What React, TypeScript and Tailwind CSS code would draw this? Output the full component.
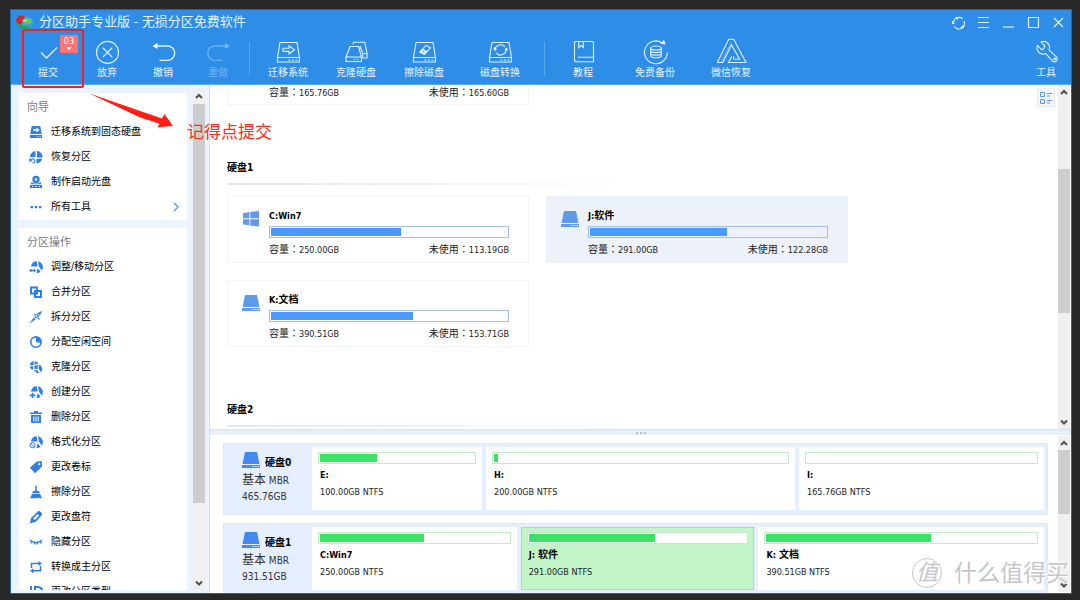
import type { ReactNode } from "react";

const BLUE = "#2f7fe6";

/* ---------- icons ---------- */

function ToolSvg({ children }: { children: ReactNode }) {
  return (
    <svg className="h-6 w-6 overflow-visible" viewBox="0 0 24 24" fill="none" stroke="#e3f1ff" strokeWidth="1.1">
      {children}
    </svg>
  );
}

const driveOutline = (
  <>
    <path d="M4 2.5h17l2.5 15h-22z" />
    <path d="M1.5 17.5V22h22v-4.5M12.5 20h2M16 20h2M19.5 20h2" />
  </>
);

const toolIcons: Record<string, ReactNode> = {
  commit: <path d="M5 12.5l5.5 5.5L21 7.5" strokeWidth="1.4" />,
  discard: (
    <>
      <circle cx="12.5" cy="12.4" r="11" />
      <path d="M7.8 7.7l9.4 9.4M17.2 7.7l-9.4 9.4" strokeWidth="1.3" />
    </>
  ),
  undo: (
    <>
      <path d="M4 6h12.5a7.2 7.2 0 0 1 0 14.4H8.5" strokeWidth="1.4" />
      <path d="M1.5 6l5-3v6z" fill="#fff" stroke="none" />
    </>
  ),
  redo: (
    <>
      <path d="M21 6H9a7.2 7.2 0 0 0 0 14.4h7" strokeWidth="1.4" />
      <path d="M24 6l-5-3v6z" fill="#fff" stroke="none" />
    </>
  ),
  migrate: (
    <>
      {driveOutline}
      <path d="M7 8.2h6V5.8l5.5 4-5.5 4v-2.4H7z" />
    </>
  ),
  clone: (
    <>
      <path d="M6 6.5h8.5l3 10.5H2z" />
      <path d="M2 17v4.5h15.5V17M9.5 19.3h1.5M12.5 19.3H14" />
      <path d="M8.7 4.2l.8-2h11.3l2.2 11.3H18.8l-3-7.5M23 13.5V18h-4.2v-4.5" />
    </>
  ),
  wipe: (
    <>
      {driveOutline}
      <path d="M8 12l6-6.500 4.500 2.300-6 6.500z" />
      <path d="M10.500 9.300l4.500 2.300-2.500 2.700L8 12z" fill="#e3f1ff" />
      <path d="M10.800 11.400l1.700.9" stroke="#2e8de7" />
    </>
  ),
  convert: (
    <>
      {driveOutline}
      <path d="M7 11a5.6 5.6 0 0 1 10-4M18.2 8.8a5.6 5.6 0 0 1-10 4" />
      <path d="M5.3 9.5l1.7-3 2 3zM16.5 10.2l1.8-3 1.7 3z" fill="#fff" stroke="none" />
    </>
  ),
  book: (
    <>
      <path d="M22.5 17.3V2.5a1 1 0 0 0-1-1h-17a1 1 0 0 0-1 1V20a1.6 1.6 0 0 0 1.6 1.7h17.4v-4.4H7" />
      <path d="M7.7 1.5v6l2.3-2 2.3 2v-6" />
    </>
  ),
  backup: (
    <>
      <path d="M24.300 12.500A11.400 11.400 0 1 1 19 2.700" />
      <path d="M17.500 3.800L21-.2l1.400 4.600z" fill="#fff" stroke="none" />
      <ellipse cx="13" cy="8" rx="5.3" ry="2" />
      <path d="M7.700 8v7.700c0 1.200 2.400 2 5.300 2s5.300-.8 5.300-2V8M7.700 10.600c0 1.200 2.400 2 5.300 2s5.300-.8 5.300-2M7.700 13.200c0 1.200 2.400 2 5.300 2s5.300-.8 5.300-2" />
    </>
  ),
  wechat: (
    <>
      <path d="M-1.700 22.500L9.800-.7h4.900L27 22.500H9.500l3.200-6" />
      <path d="M-1.700 22.500h5.500l8.700-17.500 8.200 14.200h-4.500c-1.800 0-2-1.300-1.600-2.900" />
      <path d="M2 22.500L12.300 2.500" opacity=".35" />
    </>
  ),
  wrench: (
    <>
      <path
        transform="translate(25 0) scale(-1 1)"
        d="M14.700 6.300a1 1 0 0 0 0 1.400l1.600 1.600a1 1 0 0 0 1.400 0l3.770-3.770a6 6 0 0 1-7.940 7.940l-6.910 7.410a2.700 2.700 0 0 1-4-4l7.410-6.910a6 6 0 0 1 7.940-7.940l-3.760 3.760z"
      />
      <circle cx="20.800" cy="18.700" r="1" />
    </>
  ),
};

// the pie piece shared by several partition commands
const pie = <path d="M2 6.500A5.800 5.800 0 0 1 7.500 1l1.200 5.600zM9 1.200l1 5.500 2.700 3.800A5.900 5.900 0 0 0 9 1.200zM8.500 8.300l-1 4.600c1.700.1 3-.4 4.100-1.500z" />;

const sideIcons: Record<string, ReactNode> = {
  migrate: (
    <>
      <path d="M2.800 1h8.400l1.600 8H1.200zM1 10h12v3H1z" />
      <path d="M4 4.300h3.500V2.600L10.700 5 7.500 7.500V5.800H4zM8.500 11.200h1v.8h-1zM10.700 11.200h1v.8h-1z" fill="#fff" />
    </>
  ),
  recover: (
    <>
      <path d="M6.500 1A6 6 0 0 0 1 7h5.500zM8 1v6.500h5.500A6 6 0 0 0 8 1zM7.500 8.800h5.700a6 6 0 0 1-5.700 4.500z" />
      <path d="M1 10.200c1.500-2 4.300-1.700 4.800.5.300 1.700-1.300 2.800-2.500 2M.8 8.500v2.400h2.400" fill="none" stroke={BLUE} strokeWidth="1.200" />
    </>
  ),
  disc: (
    <>
      <path d="M7 .8a3.700 3.700 0 1 0 0 7.400A3.700 3.700 0 0 0 7 .8zm0 2.500a1.200 1.200 0 1 1 0 2.400 1.200 1.200 0 0 1 0-2.400z" fillRule="evenodd" />
      <path d="M2.500 7l-.8 2.200h10.600L11.500 7C9.200 9.300 5 9.300 2.500 7zM1 10h12v3H1z" />
      <path d="M3 11.100h1.200v.9H3zM6.400 11.100h1.200v.9H6.400zM9.800 11.100H11v.9H9.800z" fill="#fff" />
    </>
  ),
  dots: <path d="M1.500 6H4v2.200H1.500zM5.700 6h2.500v2.200H5.700zM10 6h2.500v2.200H10z" />,
  resize: (
    <>
      {pie}
      <path d="M0 10.500l2.500-2v1.300h2.400V8.500l2.400 2-2.400 2v-1.300H2.500v1.300z" />
    </>
  ),
  merge: (
    <>
      <path d="M1 1.500h8v8H1zM3 3.500v4h4v-4z" fillRule="evenodd" />
      <path d="M5 5h8v8H5zM7 7v4h4V7z" fillRule="evenodd" />
    </>
  ),
  split: <path d="M13.500.8L8.300 3.200l2.500 2.300zM8 3.800L5.200 6.700l2 2L10.300 6zM4.700 7.600L.5 13.500l6-3.900zM5.500 3.500l5.500 5.700-1 .5L4.700 4.300z" />,
  alloc: <path d="M7 1a6 6 0 1 0 0 12A6 6 0 0 0 7 1zm0 1.800V7.500h4.200A4.300 4.300 0 1 1 7 2.800z" fillRule="evenodd" />,
  clone: (
    <>
      <path d="M5 1.200A4.700 4.700 0 0 0 .8 5l3.600.2zM5.800 1.200l-.3 4 2-1.500 2.300.1A5 5 0 0 0 5.800 1.200zM.9 6.200l3 .1.5 3.400A4 4 0 0 1 .9 6.200z" />
      <path d="M8.800 4.800A4.200 4.200 0 0 0 5 8.600l3.600.7zM9.900 4.800l-.2 4 2 3.400a4.200 4.200 0 0 0-1.800-7.400zM5.200 9.800l3.300.6 2 2.500a4.100 4.100 0 0 1-5.300-3.100z" />
    </>
  ),
  create: (
    <>
      {pie}
      <path d="M2.700 7.700h1.700v1.900h1.900v1.600H4.400v1.900H2.700v-1.900H.8V9.600h1.900z" />
    </>
  ),
  trash: (
    <>
      <path d="M5 1h4v1.500h4V4H1V2.500h4zM2 5h10v8H2z" />
      <path d="M4.300 6.500h1v5h-1zM6.500 6.500h1v5h-1zM8.700 6.500h1v5h-1z" fill="#fff" />
    </>
  ),
  format: (
    <>
      {pie}
      <circle cx="3.600" cy="10.200" r="3.300" fill="#fff" />
      <circle cx="3.600" cy="10.200" r="2.500" fill="none" stroke={BLUE} />
      <path d="M1.900 8.500l3.400 3.400" stroke={BLUE} />
    </>
  ),
  tag: <path d="M7.500 1.800L12.700 1l.5 5.300-7 7L.8 7.800zM10.300 3a1.100 1.100 0 1 0 .1 2.200A1.100 1.100 0 0 0 10.300 3z" fillRule="evenodd" />,
  broom: <path d="M6.300.8h1.500v4.700l2.900 1.200v1.500H3.400V6.700l2.900-1.200zM3 9h8.100l2 4.200H9.600l-.7-1.700v1.700H1z" />,
  pencil: (
    <path d="M9 1.300c1.400-1 4.700 2 3.900 3.800L6.500 12 1 13.200l1-5.100zM8.500 4L4.200 8.600l1.600 1.500L10 5.500z" fillRule="evenodd" />
  ),
  hide: <path d="M.8 5c3.500 3.300 8.900 3.300 12.400 0M3 6.500L1.600 8.500M5.800 7.500v2M8.300 7.500v2M11 6.500l1.500 2" fill="none" stroke={BLUE} strokeWidth="1.300" />,
  swap: (
    <>
      <path d="M2.500 8V3.500H10M11.500 6v4.800H4" fill="none" stroke={BLUE} strokeWidth="1.500" />
      <path d="M9.500.9l3.500 2.600-3.500 2.600zM4.500 8.200L1 10.800l3.500 2.600z" />
    </>
  ),
  id: <path d="M1 1h2v11H1zM5 1h4a5.500 5.500 0 0 1 0 11H5zM7 3v7h1.700a3.500 3.500 0 0 0 0-7z" fillRule="evenodd" />,
};

function DriveIcon({ strong = false }: { strong?: boolean }) {
  return (
    <svg className="w-[18px] h-[16px] shrink-0" viewBox="0 0 18 16" fill={strong ? "#4289ee" : "#609bea"}>
      <path d="M3 0h12l2.500 12H.5zM0 13h18v3H0z" />
      <path d="M10.500 14h1.500v1h-1.500zM13 14h1.500v1H13zM15.500 14H17v1h-1.500z" fill="#fff" />
    </svg>
  );
}

function WindowsIcon() {
  return (
    <svg className="w-[18px] h-[16px] shrink-0" viewBox="0 0 18 16" fill="#609bea">
      <path d="M1 2.200L7.400 1v6.200H1zM8.300.9L17 0v7.200H8.300zM1 8.200h6.400v6L1 13.400zM8.300 8.200H17V15.600l-8.700-1.200z" />
    </svg>
  );
}

function Logo() {
  return (
    <svg className="w-[18px] h-[14px]" viewBox="0 0 18 14">
      <ellipse cx="10" cy="7.500" rx="7.600" ry="6" fill="#38a8dc" />
      <path d="M3 7.500c2 3 5 4 8.500 3.200l3.500 1.500c-4 2.500-10 2-13-2z" fill="#2f9f45" />
      <path d="M6.500 5.500C10 2 15 3 16.500 6.500c-2 2.500-6 3-8.500 1.500z" fill="#6fc05c" />
      <path d="M0 5C1 .8 5.500-.3 9 1.300L6.800 5.200 5.500 9.300C2.200 9.500 0 8 0 5z" fill="#de2321" />
      <path d="M6.800 5.200l2 .8 2-1.500" stroke="#fff" fill="none" />
    </svg>
  );
}

/* ---------- data ---------- */

const tools = [
  { icon: "commit", label: "提交", cls: "w-[60px]" },
  { icon: "discard", label: "放弃", cls: "w-[58px]" },
  { icon: "undo", label: "撤销", cls: "w-[54px]" },
  { icon: "redo", label: "重做", cls: "w-[56px]", disabled: true },
  null,
  { icon: "migrate", label: "迁移系统", cls: "w-[70px]" },
  { icon: "clone", label: "克隆硬盘", cls: "w-[66px]" },
  { icon: "wipe", label: "擦除磁盘", cls: "w-[70px]" },
  { icon: "convert", label: "磁盘转换", cls: "w-[82px]" },
  null,
  { icon: "book", label: "教程", cls: "w-[70px]" },
  { icon: "backup", label: "免费备份", cls: "w-[74px]" },
  { icon: "wechat", label: "微信恢复", cls: "w-[78px]" },
];

const wizard = [
  ["migrate", "迁移系统到固态硬盘"],
  ["recover", "恢复分区"],
  ["disc", "制作启动光盘"],
  ["dots", "所有工具"],
];

const operations = [
  ["resize", "调整/移动分区"],
  ["merge", "合并分区"],
  ["split", "拆分分区"],
  ["alloc", "分配空闲空间"],
  ["clone", "克隆分区"],
  ["create", "创建分区"],
  ["trash", "删除分区"],
  ["format", "格式化分区"],
  ["tag", "更改卷标"],
  ["broom", "擦除分区"],
  ["pencil", "更改盘符"],
  ["hide", "隐藏分区"],
  ["swap", "转换成主分区"],
  ["id", "更改分区类型"],
];

type Volume = { name: string; size: string; free: string; used: number; system?: boolean; selected?: boolean };

const volumes: Volume[] = [
  { name: "C:Win7", size: "250.00GB", free: "113.19GB", used: 55, system: true },
  { name: "J:软件", size: "291.00GB", free: "122.28GB", used: 58, selected: true },
  { name: "K:文档", size: "390.51GB", free: "153.71GB", used: 60 },
];

const disks = [
  {
    name: "硬盘0",
    size: "465.76GB",
    parts: [
      { name: "E:", size: "100.00GB NTFS", used: 37, share: 158 },
      { name: "H:", size: "200.00GB NTFS", used: 1.5, share: 297 },
      { name: "I:", size: "165.76GB NTFS", used: 0, share: 233 },
    ],
  },
  {
    name: "硬盘1",
    size: "931.51GB",
    parts: [
      { name: "C:Win7", size: "250.00GB NTFS", used: 55, share: 193 },
      { name: "J: 软件", size: "291.00GB NTFS", used: 58, share: 222, selected: true },
      { name: "K: 文档", size: "390.51GB NTFS", used: 61, share: 274 },
    ],
  },
];

/* ---------- pieces ---------- */

function Chevron({ up = false }: { up?: boolean }) {
  return (
    <svg className="h-[14px] w-full shrink-0" viewBox="0 0 12 14" fill="none" stroke="#505050" strokeWidth="2">
      <path d={up ? "M3 9l3-3 3 3" : "M3 5.500l3 3 3-3"} />
    </svg>
  );
}

function Scrollbar({ before, thumb, after }: { before: number; thumb: number; after: number }) {
  return (
    <div className="flex w-3 shrink-0 flex-col bg-[#f0f0f0]">
      <Chevron up />
      <div className="flex min-h-0 flex-1 flex-col">
        <div style={{ flex: before }} />
        <div className="bg-[#cdcdcd]" style={{ flex: thumb }} />
        <div style={{ flex: after }} />
      </div>
      <Chevron />
    </div>
  );
}

function SidePanel({ title, items }: { title: string; items: string[][] }) {
  return (
    <section className="shrink-0 bg-white py-px">
      <h2 className="h-6 pt-0.5 pl-2 text-[11px] leading-6 text-[#777c84]">{title}</h2>
      <ul className="mt-px">
        {items.map(([icon, label]) => (
          <li key={label}>
            <button className="flex h-[25px] w-full items-center pl-[10px] pr-[6px] text-[10px] text-black">
              <svg className="mr-2 h-[14px] w-[14px]" viewBox="0 0 14 14" fill={BLUE}>
                {sideIcons[icon]}
              </svg>
              {label}
              {icon === "dots" && (
                <svg className="ml-auto h-2.5 w-2.5" viewBox="0 0 10 10" fill="none" stroke="#58a5ee" strokeWidth="1.500">
                  <path d="M3 1l4 4-4 4" />
                </svg>
              )}
            </button>
          </li>
        ))}
      </ul>
    </section>
  );
}

function Field({ label, value }: { label: string; value: string }) {
  return (
    <span>
      {label}
      <span className="font-['Noto_Sans_CJK_TC',sans-serif]">：</span>
      <span className="text-[9px]">{value}</span>
    </span>
  );
}

function Sizes({ size, free }: { size: string; free: string }) {
  return (
    <div className="flex justify-between text-[10px] leading-[14px] text-[#222]">
      <Field label="容量" value={size} />
      <Field label="未使用" value={free} />
    </div>
  );
}

function VolumeCard({ v }: { v: Volume }) {
  return (
    <article
      className={`flex h-[67px] w-[302px] shrink-0 border pl-[14px] pr-[19px] ${
        v.selected ? "border-[#edf2fa] bg-[#edf2fa]" : "border-[#f3f4f6] bg-white"
      }`}
    >
      <div className="w-[27px] shrink-0 pt-[14px]">{v.system ? <WindowsIcon /> : <DriveIcon />}</div>
      <div className="flex-1 pt-3">
        <h3 className="h-[14px] text-[10px] leading-[14px] font-bold text-black">
          <Mixed text={v.name} />
        </h3>
        <div className="mt-[3px] mb-1 h-3 border border-[#a4c0ea] p-px">
          <div className="h-full bg-[#4b98fe]" style={{ width: `${v.used}%` }} />
        </div>
        <Sizes size={v.size} free={v.free} />
      </div>
    </article>
  );
}

// latin part is set one pixel smaller than the chinese part
function Mixed({ text }: { text: string }) {
  const i = text.indexOf(":");
  const rest = text.slice(i + 1);
  const latinRest = /^[\x20-\x7f]*$/.test(rest);
  return (
    <>
      <span className="text-[9px]">{text.slice(0, i + 1)}</span>
      <span className={latinRest ? "text-[9px]" : "text-[10px]"}>{rest}</span>
    </>
  );
}

function GroupTitle({ children }: { children: ReactNode }) {
  return (
    <>
      <h2 className="h-5 text-[10px] leading-5 font-bold text-black">{children}</h2>
      <div className="mt-[5px] h-0.5 w-1/2 bg-linear-to-r from-[#dfe8f3] to-transparent" />
    </>
  );
}

/* ---------- page ---------- */

export default function App() {
  return (
    <div className="h-screen bg-[#282828] pt-[9px] pr-2 pb-[6px] pl-[10px] font-['DejaVu_Sans_Condensed','Noto_Sans_CJK_SC',sans-serif]">
      <div className="relative flex h-full flex-col overflow-hidden border border-[#1c69a8] bg-white">
        <header className="shrink-0 border-b border-[#5eaaf3] bg-[#2e8de7] text-[#e6f3ff]">
          <div className="flex h-6 items-center pl-[5px]">
            <Logo />
            <h1 className="ml-[5px] text-[13px] leading-6">分区助手专业版 - 无损分区免费软件</h1>
            <div className="ml-auto flex">
              {[
                ["刷新", <><path d="M2.500 8a5.500 5.500 0 0 1 9-4.300M13 6a5.500 5.500 0 0 1-9.500 5.500M1.500 6v2.500h2" /><path d="M4 2.500h3v2.500zM9 13h3.500v-3z" fill="#fff" stroke="none" /></>],
                ["菜单", <path d="M2 2.500h11M2 7.500h11M2 12.500h11" />],
                ["最小化", <path d="M2 12h11" />],
                ["最大化", <path d="M2.500 2.500h10v10h-10z" />],
                ["关闭", <path d="M3 3l9 9M12 3l-9 9" />],
              ].map(([label, shape]) => (
                <button key={label as string} aria-label={label as string} className="flex h-6 w-[25px] items-center justify-center">
                  <svg className="h-[15px] w-[15px]" viewBox="0 0 15 15" fill="none" stroke="#e3f1ff" strokeWidth="1.200">
                    {shape}
                  </svg>
                </button>
              ))}
            </div>
          </div>
          <nav className="flex h-[50px] pl-[7px]">
            {tools.map((t, i) =>
              t ? (
                <button
                  key={i}
                  disabled={t.disabled}
                  className={`relative flex flex-col items-center pt-1.5 disabled:opacity-35 ${t.cls}`}
                >
                  <ToolSvg>{toolIcons[t.icon]}</ToolSvg>
                  <span className="mt-0.5 text-[10px] leading-[14px]">{t.label}</span>
                  {t.icon === "commit" && (
                    <span className="absolute top-px left-[42px] flex h-[18px] w-[18px] flex-col items-center bg-[#fb7474] text-[9px] leading-3 text-white">
                      03
                      <span className="border-x-[3px] border-t-[3px] border-x-transparent border-t-white" />
                    </span>
                  )}
                </button>
              ) : (
                <span key={i} className="mx-[3px] mt-2 h-[34px] w-px bg-[#5ba7ee]" />
              )
            )}
            <button className="ml-auto flex w-[50px] flex-col items-center pt-1.5">
              <ToolSvg>{toolIcons.wrench}</ToolSvg>
              <span className="mt-0.5 text-[10px] leading-[14px]">工具</span>
            </button>
          </nav>
        </header>

        <div className="flex min-h-0 flex-1">
          <aside className="flex w-[199px] shrink-0 border-r border-[#d8e3f1] bg-[#eaf3ff] pr-1 pl-2">
            <div className="mt-2 mb-[3px] flex w-[168px] flex-col gap-2 overflow-hidden">
              <SidePanel title="向导" items={wizard} />
              <SidePanel title="分区操作" items={operations} />
            </div>
            <div className="mt-1 mb-[3px] ml-auto flex">
              <Scrollbar before={1} thumb={400} after={73} />
            </div>
          </aside>

          <main className="flex min-w-0 flex-1 flex-col">
            <div className="relative flex h-[344px] shrink-0">
              <div className="min-w-0 flex-1 overflow-hidden pl-[17px]">
                {/* only the foot of the first group's last card is in view */}
                <div className="h-5 w-[302px] border border-t-0 border-[#f3f4f6] pr-[19px] pl-[41px]">
                  <Sizes size="165.76GB" free="165.60GB" />
                </div>
                <section className="pt-[53px]">
                  <GroupTitle>硬盘1</GroupTitle>
                  <div className="mt-[11px] flex flex-wrap gap-[17px]">
                    {volumes.map((v) => (
                      <VolumeCard key={v.name} v={v} />
                    ))}
                  </div>
                </section>
                <section className="pt-[53px]">
                  <GroupTitle>硬盘2</GroupTitle>
                </section>
              </div>
              <button aria-label="切换视图" className="absolute top-[3px] right-4 flex h-[19px] w-[18px] items-center justify-center border border-[#e6edf7] bg-[#f3f7fd]">
                <svg className="h-3 w-3" viewBox="0 0 12 12" fill="none" stroke="#5b9bef">
                  <path d="M.5.5h4v4h-4zM.5 7.500h4v4h-4zM7 1.500h5M7 4h3M7 8.500h5M7 11h3" />
                </svg>
              </button>
              <div className="mr-px flex">
                <Scrollbar before={70} thumb={144} after={102} />
              </div>
            </div>

            <div className="flex h-1.5 shrink-0 items-center justify-center gap-0.5 border-t border-[#d9e2ee] bg-[#e9eff7]">
              <i className="h-0.5 w-0.5 bg-[#b4c0d0]" />
              <i className="h-0.5 w-0.5 bg-[#b4c0d0]" />
              <i className="h-0.5 w-0.5 bg-[#b4c0d0]" />
            </div>

            <div className="flex min-h-0 flex-1">
              <div className="flex min-w-0 flex-1 flex-col gap-2 overflow-hidden pt-2 pr-[10px] pl-[13px]">
                {disks.map((d) => (
                  <section key={d.name} className="flex h-[72px] shrink-0 border border-[#dce8f8] bg-[#e5efff] pt-[3px] pr-[3px] pb-1">
                    <div className="w-[88px] shrink-0 pl-[18px] text-[#333]">
                      <div className="flex h-[22px] items-start gap-[5px] pt-[5px]">
                        <DriveIcon strong />
                        <h3 className="mt-1 text-[10px] leading-[14px] font-bold text-black">{d.name}</h3>
                      </div>
                      <p className="mt-[3px] text-[10px] leading-4">
                        <span className="text-[12px]">基本</span> MBR
                      </p>
                      <p className="text-[10px] leading-4">{d.size}</p>
                    </div>
                    <div className="flex min-w-0 flex-1 gap-1">
                      {d.parts.map((p) => (
                        <button
                          key={p.name}
                          className={`flex min-w-0 flex-col items-stretch justify-start border px-[5px] pt-1 text-left ${
                            p.selected ? "border-[#a5dfb0] bg-[#c2f6c9]" : "border-white bg-white"
                          }`}
                          style={{ flex: `${p.share} 1 0px` }}
                        >
                          <span className="block h-3 border border-[#c3edca] bg-white p-px">
                            <span className="block h-full bg-[#3be064]" style={{ width: `${p.used}%` }} />
                          </span>
                          <span className="mt-1 block h-[14px] pl-0.5 text-[10px] leading-[14px] font-bold text-black">
                            <Mixed text={p.name} />
                          </span>
                          <span className="mt-[3px] block pl-0.5 text-[9px] leading-[14px] text-[#222]">{p.size}</span>
                        </button>
                      ))}
                    </div>
                  </section>
                ))}
              </div>
              <div className="mt-px mr-px mb-px flex">
                <Scrollbar before={0} thumb={64} after={64} />
              </div>
            </div>
          </main>
        </div>

        {/* hand-made annotations */}
        <div className="pointer-events-none absolute top-[19px] left-[11px] h-[59px] w-[62px] rounded-xs border-2 border-[#fb2013]" />
        <svg className="pointer-events-none absolute top-[80px] left-[76px] h-10 w-[90px]" viewBox="0 0 90 40" fill="#fb2013">
          <path d="M2.500 3.500l72.500 25 2.500-4.500L86 36l-15.500 1.300 2-3.500L52 27z" />
        </svg>
        <p className="pointer-events-none absolute top-[110px] left-[176px] text-[17px] leading-6 text-[#fb2f22]">记得点提交</p>

        {/* watermark */}
        <div className="pointer-events-none absolute right-0.5 bottom-[5px] flex items-center gap-3 whitespace-nowrap text-[#c4c6ca] [text-shadow:-1px_-1px_0_#fff,1px_1px_0_#fff]">
          <span className="flex h-[30px] w-[30px] items-center justify-center rounded-full border border-[#c4c6ca] text-[22px] leading-6 italic">值</span>
          <span className="text-[23px] leading-6">什么值得买</span>
        </div>
      </div>
    </div>
  );
}
